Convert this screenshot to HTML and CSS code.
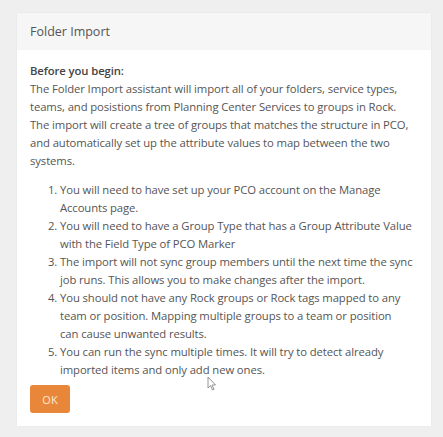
FILE: index.html
```html
<!DOCTYPE html>
<html>
<head>
<meta charset="utf-8">
<link rel="stylesheet" href="styles.css">
</head>
<body>
<div class="card">
  <div class="card-header">Folder Import</div>
  <div class="card-body">
    <p class="intro"><strong>Before you begin:</strong><br>The Folder Import assistant will import all of your folders, service types, teams, and posistions from Planning Center Services to groups in Rock. The import will create a tree of groups that matches the structure in PCO, and automatically set up the attribute values to map between the two systems.</p>
    <ol class="steps">
      <li>You will need to have set up your PCO account on the Manage Accounts page.</li>
      <li>You will need to have a Group Type that has a Group Attribute Value with the Field Type of PCO Marker</li>
      <li>The import will not sync group members until the next time the sync job runs. This allows you to make changes after the import.</li>
      <li>You should not have any Rock groups or Rock tags mapped to any team or position. Mapping multiple groups to a team or position<br>can cause unwanted results.</li>
      <li>You can run the sync multiple times. It will try to detect already imported items and only add new ones.</li>
    </ol>
    <button class="btn-ok">OK</button>
  </div>
</div>
<svg class="cursor" width="10" height="15" viewBox="0 0 10 15"><path d="M1 1 L1 12 L3.5 9.5 L5.5 14 L7 13.3 L5 9 L8.5 9 Z" fill="#fff" stroke="#888" stroke-width="0.9" stroke-linejoin="round"/></svg>
</body>
</html>
```

FILE: styles.css
```css
html, body {
  margin: 0;
  padding: 0;
}
body {
  background: #efefef;
  font-family: "Open Sans", "Noto Sans", sans-serif;
  color: #555;
  padding: 13px 11px 11px 17px;
  position: relative;
  height: 437px;
  box-sizing: border-box;
}
.card {
  width: 414px;
  height: 413px;
  background: #fff;
  display: flex;
  flex-direction: column;
  box-shadow: 0 0 2px rgba(0,0,0,0.05);
}
.card-header {
  background: #f6f6f6;
  height: 37px;
  box-sizing: border-box;
  padding: 0 13px;
  display: flex;
  align-items: center;
  font-size: 12.5px;
  color: #555;
}
.card-body {
  padding: 12px 15px 12px 13px;
  font-size: 11.3px;
  line-height: 18px;
  letter-spacing: -0.1px;
}
.intro {
  margin: 0 0 11px;
}
.intro strong {
  color: #444;
  font-weight: 600;
}
.steps {
  margin: 0 0 6px;
  padding-left: 30px;
}
.btn-ok {
  width: 40px;
  height: 28px;
  background: #e8873a;
  color: #fbe7d4;
  border: none;
  border-radius: 3px;
  font-family: inherit;
  font-size: 11px;
  padding: 0;
}
.cursor {
  position: absolute;
  left: 207px;
  top: 376px;
}
```
